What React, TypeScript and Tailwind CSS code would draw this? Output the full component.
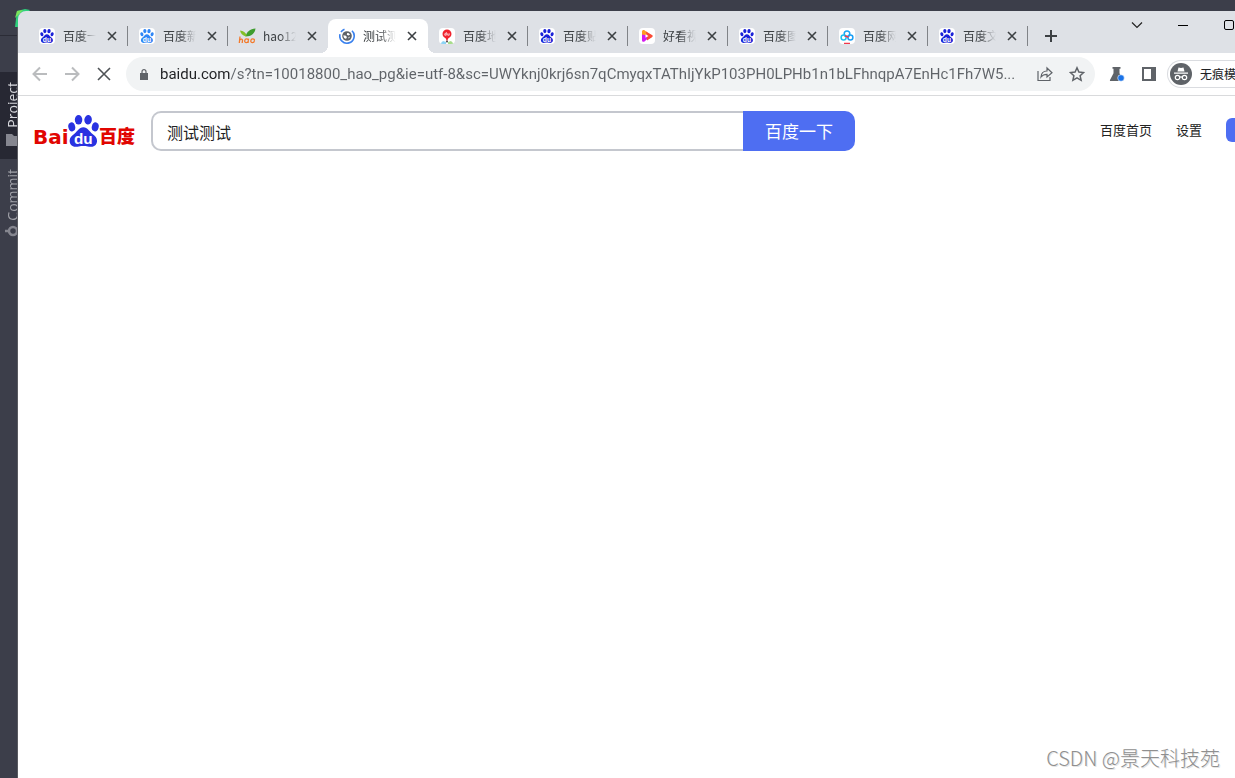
import { useState } from 'react';
import type { ReactNode } from 'react';
import clsx from 'clsx';

const PAGE_URL =
  'baidu.com/s?tn=10018800_hao_pg&ie=utf-8&sc=UWYknj0krj6sn7qCmyqxTAThIjYkP103PH0LPHb1n1bLFhnqpA7EnHc1Fh7W5...';

interface PawProps {
  className?: string;
  color?: string;
}

function Paw({ className, color = '#2932e1' }: PawProps) {
  return (
    <svg viewBox="0 0 91 94" className={className} aria-hidden="true">
      <g fill={color}>
        <ellipse cx="11" cy="35" rx="10" ry="13.5" transform="rotate(-14 11 35)" />
        <ellipse cx="31" cy="14" rx="11" ry="14" />
        <ellipse cx="59" cy="14" rx="11" ry="14" transform="rotate(6 59 14)" />
        <ellipse cx="80" cy="35" rx="10" ry="13.5" transform="rotate(14 80 35)" />
        <path d="M45 36c13 0 17 12 27 20 10 7 16 14 12 27-4 12-18 11-26 9.500-8-1.500-18-1.500-26 0-8 1.500-22 2.500-26-9.500-4-13 2-20 12-27 10-8 14-20 27-20z" />
      </g>
      <text x="45" y="85" textAnchor="middle" fill="#fff" fontFamily="Liberation Sans, sans-serif" fontWeight="700" fontSize="45">
        du
      </text>
    </svg>
  );
}

function Favicon({ children }: { children: ReactNode }) {
  return <span className="flex h-4 w-4 items-center justify-center overflow-hidden rounded-sm bg-white">{children}</span>;
}

const pawIcon = (
  <Favicon>
    <Paw className="h-3.5 w-3.5" color="#1a22d8" />
  </Favicon>
);

const newsIcon = (
  <Favicon>
    <Paw className="h-3.5 w-3.5" color="#2f86f6" />
  </Favicon>
);

const haoIcon = (
  <svg viewBox="0 0 16 16" className="h-4 w-4 overflow-visible" aria-hidden="true">
    <path d="M6.500 8.500C7.500 4 11 1 16.500.5 16 5 12.500 8.500 6.500 8.500z" fill="#3f9d2f" />
    <path d="M7 8.500C3.500 7.500 1.500 5.500 1 2.500 4.500 3 6.500 4.500 7.500 7z" fill="#84bf25" />
    <path
      d="M1 8.500L.3 15M.7 12.200c1-1.600 3-1.300 2.800.3L3.200 15M9.600 10.700L9 15M9.300 12.700c-.3 2.600-3.900 2.600-3.600 0s3.900-2.500 3.600 0M15.400 12.700c-.3 2.600-3.900 2.600-3.600 0s3.900-2.500 3.600 0"
      fill="none"
      stroke="#f37a2b"
      strokeWidth="1.300"
    />
  </svg>
);

const loadingIcon = (
  <svg viewBox="0 0 16 16" className="h-4 w-4" aria-hidden="true">
    <path d="M13 2.800A7.200 7.200 0 1 1 1 6.200M2 4A7.200 7.200 0 0 1 5.500 1.300" fill="none" stroke="#3b82ee" strokeWidth="1.600" />
    <circle cx="8" cy="8" r="4.800" fill="#5f6368" />
    <path d="M4.400 7.200l2.600.6.900 1.400-.8 1.500C5.400 10.600 4.300 9 4.400 7.200zM8.200 5.100c1.200-.1 2.300.5 2.900 1.500l-1.700.9-1.600-.8zM9.500 9l1.500-.2-1.300 1.900z" fill="#fff" />
  </svg>
);

const mapIcon = (
  <Favicon>
    <svg viewBox="0 0 16 16" className="h-4 w-4" aria-hidden="true">
      <path d="M1 16l3-3 3 1v2z" fill="#8bd3f5" />
      <path d="M9 14l3-1 3 3H9z" fill="#a6dc8a" />
      <path d="M8 1.500a4.500 4.500 0 0 1 4.500 4.500c0 2.500-2.300 3.700-3.300 4.500L8 13.500l-1.200-3C5.800 9.700 3.500 8.500 3.500 6A4.500 4.500 0 0 1 8 1.500z" fill="#f0232e" />
      <path d="M7.300 4v3.200H5.800V5.700h1.500M8.700 5.300v1.900h1.500V5.300" fill="none" stroke="#fff" strokeWidth=".7" />
      <circle cx="8" cy="13.500" r="1.100" fill="#555" />
    </svg>
  </Favicon>
);

const videoIcon = (
  <Favicon>
    <svg viewBox="0 0 16 16" className="h-4 w-4" aria-hidden="true">
      <path d="M3 3.500C3 2 4.500 1.500 5.500 2.200L9 5 3 11z" fill="#ff9b21" />
      <path d="M3 6.500l5 1v3.800l-2.500 2.200C4.300 14.300 3 13.500 3 12.200z" fill="#d21cf0" />
      <path d="M7 3.500l6 3.600c1 .6 1 1.500 0 2.100l-5 3.300z" fill="#fb4a35" />
      <path d="M6.500 6.200l3 1.800-3 1.800z" fill="#fff" />
    </svg>
  </Favicon>
);

const diskIcon = (
  <Favicon>
    <svg viewBox="0 0 16 16" className="h-4 w-4" fill="none" strokeWidth="1.500" aria-hidden="true">
      <circle cx="8" cy="5.800" r="2.800" stroke="#1aa5f5" />
      <circle cx="4.600" cy="9.500" r="2.500" stroke="#1ec0ee" />
      <circle cx="11.400" cy="9.500" r="2.500" stroke="#1a9ff5" />
      <path d="M6 7.800l3.500 1.500" stroke="#f0394c" />
      <path d="M5 15.500h6" stroke="#f0394c" />
    </svg>
  </Favicon>
);

const TABS = [
  { title: '百度一下', icon: pawIcon },
  { title: '百度新闻', icon: newsIcon },
  { title: 'hao123', icon: haoIcon },
  { title: '测试测试', icon: loadingIcon },
  { title: '百度地图', icon: mapIcon },
  { title: '百度贴吧', icon: pawIcon },
  { title: '好看视频', icon: videoIcon },
  { title: '百度图片', icon: pawIcon },
  { title: '百度网盘', icon: diskIcon },
  { title: '百度文库', icon: pawIcon },
];

function IdeSidebar() {
  return (
    <aside className="flex w-[18px] shrink-0 flex-col overflow-hidden border-r border-[#5a5b61] bg-[#3c3e4a] font-['Open_Sans',sans-serif] text-sm leading-4">
      <div className="h-[25px] shrink-0 border-b border-[#2b2c36]" />
      <div className="h-9 shrink-0" />
      <button className="flex h-[87px] shrink-0 flex-col items-start gap-1.5 bg-[#272833] pt-2.5 pl-[5px] text-[#d8d9de]">
        <span className="rotate-180 [writing-mode:vertical-rl]">Project</span>
        <svg viewBox="0 0 14 12" className="ml-px h-3 w-3.5" aria-hidden="true">
          <path d="M0 0h6l2 2h6v10H0z" fill="#85868f" />
        </svg>
      </button>
      <button className="flex shrink-0 flex-col items-start gap-1 pt-2.5 pl-[5px] text-[#a0a1a8]">
        <span className="rotate-180 [writing-mode:vertical-rl]">Commit</span>
        <svg viewBox="0 0 16 12" className="h-3 w-4" fill="none" stroke="#85868f" strokeWidth="2.500" aria-hidden="true">
          <path d="M0 6h4M12 6h4" />
          <circle cx="8" cy="6" r="4" />
        </svg>
      </button>
    </aside>
  );
}

interface TabStripProps {
  active: number;
  onSelect: (index: number) => void;
}

function TabStrip({ active, onSelect }: TabStripProps) {
  return (
    <div className="flex h-[42px] shrink-0 items-end bg-[#dee1e6] pl-2.5 text-[#3c4043]">
      {TABS.map((tab, i) => {
        const isActive = i === active;
        return (
          <div
            key={tab.title}
            className={clsx('relative flex h-[34px] w-[100px] shrink-0 items-center pl-[11px]', isActive && 'rounded-t-lg bg-white')}
          >
            {isActive && (
              <>
                <span className="absolute bottom-0 -left-2 h-2 w-2 bg-[radial-gradient(circle_at_0_0,#dee1e6_8px,#fff_8px)]" />
                <span className="absolute -right-2 bottom-0 h-2 w-2 bg-[radial-gradient(circle_at_100%_0,#dee1e6_8px,#fff_8px)]" />
              </>
            )}
            <button className="flex items-center gap-2" onClick={() => onSelect(i)}>
              {tab.icon}
              <span className="w-[33px] overflow-hidden text-left text-xs whitespace-nowrap [mask-image:linear-gradient(to_right,black_50%,transparent)]">
                {tab.title}
              </span>
            </button>
            <button className="ml-2 flex h-4 w-4 items-center justify-center" aria-label="关闭">
              <svg viewBox="0 0 8 8" className="h-2 w-2 overflow-visible" stroke="#3c4043" strokeWidth="1.600" aria-hidden="true">
                <path d="M0 0l8 8M8 0L0 8" />
              </svg>
            </button>
            {!isActive && i + 1 !== active && <span className="absolute right-0 h-5 w-px bg-[#808387]" />}
          </div>
        );
      })}
      <button className="ml-[15px] flex h-[34px] w-4 items-center justify-center" aria-label="新标签页">
        <svg viewBox="0 0 12 12" className="h-3 w-3" stroke="#3c4043" strokeWidth="2" aria-hidden="true">
          <path d="M6 0v12M0 6h12" />
        </svg>
      </button>
      <div className="ml-auto flex h-full shrink-0 items-start gap-9 pt-[9px] pr-px">
        <button aria-label="搜索标签页">
          <svg viewBox="0 0 10 10" className="h-2.5 w-2.5 overflow-visible" fill="none" stroke="#222" strokeWidth="1.200" aria-hidden="true">
            <path d="M0 2.500l5 5 5-5" />
          </svg>
        </button>
        <button aria-label="最小化">
          <svg viewBox="0 0 10 10" className="h-2.5 w-2.5" stroke="#000" aria-hidden="true">
            <path d="M0 5.500h10" />
          </svg>
        </button>
        <button aria-label="最大化">
          <svg viewBox="0 0 10 10" className="h-2.5 w-2.5" fill="none" stroke="#000" aria-hidden="true">
            <rect x=".5" y=".5" width="9" height="9" rx="1.500" />
          </svg>
        </button>
      </div>
    </div>
  );
}

function Toolbar() {
  const [url, setUrl] = useState(PAGE_URL);

  return (
    <div className="flex h-[43px] shrink-0 items-center border-b border-[#d9dadc] bg-white">
      <div className="flex gap-4 px-3.5">
        <button aria-label="后退">
          <svg viewBox="0 0 16 16" className="h-4 w-4" fill="none" stroke="#babcbe" strokeWidth="2" aria-hidden="true">
            <path d="M15 8H2M8 1.500L1.500 8 8 14.500" />
          </svg>
        </button>
        <button aria-label="前进">
          <svg viewBox="0 0 16 16" className="h-4 w-4" fill="none" stroke="#babcbe" strokeWidth="2" aria-hidden="true">
            <path d="M1 8h13M8 1.500L14.500 8 8 14.500" />
          </svg>
        </button>
        <button aria-label="停止加载">
          <svg viewBox="0 0 16 16" className="h-4 w-4" stroke="#4f5357" strokeWidth="1.600" aria-hidden="true">
            <path d="M2 2l12 12M14 2L2 14" />
          </svg>
        </button>
      </div>

      <div className="flex h-[34px] min-w-0 flex-1 items-center rounded-full bg-[#f1f3f4] pr-2.5 pl-3.5">
        <svg viewBox="0 0 8 11" className="h-[11px] w-2 shrink-0" aria-hidden="true">
          <path d="M0 4h8v7H0z" fill="#5f6368" />
          <path d="M2 4.500V2.700a2 2 0 0 1 4 0v1.800" fill="none" stroke="#5f6368" strokeWidth="1.200" />
        </svg>
        <input
          aria-label="地址"
          value={url}
          onChange={(e) => setUrl(e.target.value)}
          className="ml-3 min-w-0 flex-1 bg-[linear-gradient(to_right,#202124_70px,#5f6368_70px)] bg-clip-text font-['Roboto',sans-serif] text-[15px] text-transparent caret-black outline-none"
        />
        <button className="ml-4 shrink-0" aria-label="分享">
          <svg viewBox="0 0 16 16" className="h-4 w-4" fill="none" stroke="#5f6368" strokeWidth="1.200" aria-hidden="true">
            <path d="M1 5v9.500h12V11" />
            <path d="M4 11c.3-4 2.500-6 6-6V2l5 4.700-5 4.300V8.300C7.500 8.300 5.500 9 4 11z" />
          </svg>
        </button>
        <button className="ml-4 shrink-0" aria-label="收藏">
          <svg viewBox="0 0 16 16" className="h-4 w-4" fill="none" stroke="#5f6368" strokeWidth="1.500" aria-hidden="true">
            <path d="M8 1.800l1.900 4.300 4.700.5-3.500 3.100 1 4.600L8 11.900l-4.100 2.400 1-4.600L1.400 6.600l4.700-.5z" />
          </svg>
        </button>
      </div>

      <button className="ml-3.5 shrink-0" aria-label="实验">
        <svg viewBox="0 0 16 16" className="h-4 w-4" aria-hidden="true">
          <path d="M3.500 1h8v1.700H10.500v4.500l3.500 6.800c.3.600 0 1-.6 1H1.600c-.6 0-.9-.4-.6-1l3.500-6.800V2.700H3.500z" fill="#5f6368" />
          <circle cx="12" cy="12" r="3.300" fill="#1a73e8" stroke="#fff" strokeWidth=".6" />
        </svg>
      </button>
      <button className="ml-4 shrink-0" aria-label="侧边栏">
        <svg viewBox="0 0 16 16" className="h-4 w-4" aria-hidden="true">
          <path d="M2 2h12v12H2z" fill="none" stroke="#5f6368" strokeWidth="2" />
          <path d="M10 2h5v12h-5z" fill="#5f6368" />
        </svg>
      </button>
      <button className="ml-2.5 flex h-7 w-[68px] shrink-0 items-center gap-2 overflow-hidden rounded-l-full border border-r-0 border-[#dadce0] pl-0.5 text-xs whitespace-nowrap text-[#202124]">
        <svg viewBox="0 0 22 22" className="h-[22px] w-[22px] shrink-0" aria-hidden="true">
          <circle cx="11" cy="11" r="11" fill="#5f6368" />
          <path d="M7.500 8.500l1-4 2.500.6 2.500-.6 1 4zM4 9.500h14v1.200H4z" fill="#fff" />
          <g fill="none" stroke="#fff" strokeWidth="1.200">
            <circle cx="7.500" cy="14.500" r="2.200" />
            <circle cx="14.500" cy="14.500" r="2.200" />
            <path d="M9.700 14.200q1.300-.7 2.600 0" />
          </g>
        </svg>
        无痕模式
      </button>
    </div>
  );
}

function BaiduLogo() {
  return (
    <a href="#" aria-label="百度首页" className="flex h-8 w-[102px] shrink-0 items-end font-bold text-[#e10601]">
      <span className="w-[35px] font-['DejaVu_Sans',sans-serif] text-xl leading-5">Bai</span>
      <Paw className="h-8 w-[31px] shrink-0" />
      <span className="text-lg leading-6 font-black whitespace-nowrap">百度</span>
    </a>
  );
}

function SearchPage() {
  const [query, setQuery] = useState('测试测试');

  return (
    <main className="flex-1 bg-white">
      <header className="flex items-center pt-[15px] pl-[15px]">
        <BaiduLogo />
        <form className="ml-4 flex h-10 shrink-0" onSubmit={(e) => e.preventDefault()}>
          <input
            aria-label="搜索"
            value={query}
            onChange={(e) => setQuery(e.target.value)}
            className="w-[592px] rounded-l-[10px] border-2 border-r-0 border-[#c4c7ce] pt-0.5 pl-3.5 text-base text-[#222] outline-none"
          />
          <button className="w-28 rounded-r-[10px] bg-[#4e6ef2] text-[17px] text-white">百度一下</button>
        </form>
        <nav className="ml-auto flex shrink-0 items-center gap-6 pb-0.5 text-[13px] text-[#222]">
          <a href="#">百度首页</a>
          <a href="#">设置</a>
          <button className="h-6 w-[9px] rounded-l-md bg-[#4e6ef2]" aria-label="登录" />
        </nav>
      </header>
    </main>
  );
}

export default function App() {
  const [active, setActive] = useState(3);

  return (
    <div className="relative flex h-screen flex-col overflow-hidden bg-[#3c3e4a] font-['Noto_Sans_CJK_SC',sans-serif]">
      <div className="flex h-[11px] shrink-0 items-end pl-[15px]">
        <svg viewBox="0 0 16 18" className="h-[18px] w-4 translate-y-4" aria-hidden="true">
          <path d="M0 18L2 2l8-2 5 1-3 3H5L3 18z" fill="#2fd07d" />
          <path d="M0 9L2 2l6-1-4 4z" fill="#7be35a" />
        </svg>
      </div>
      <div className="flex min-h-0 flex-1">
        <IdeSidebar />
        <div className="relative flex min-w-0 flex-1 flex-col overflow-hidden rounded-tl-lg">
          <TabStrip active={active} onSelect={setActive} />
          <Toolbar />
          <SearchPage />
        </div>
      </div>
      <p className="absolute right-[15px] bottom-1.5 text-xl leading-7 font-light text-[#8f8f8f] [text-shadow:1px_1px_0_#e4e4e4]">
        CSDN @景天科技苑
      </p>
    </div>
  );
}
